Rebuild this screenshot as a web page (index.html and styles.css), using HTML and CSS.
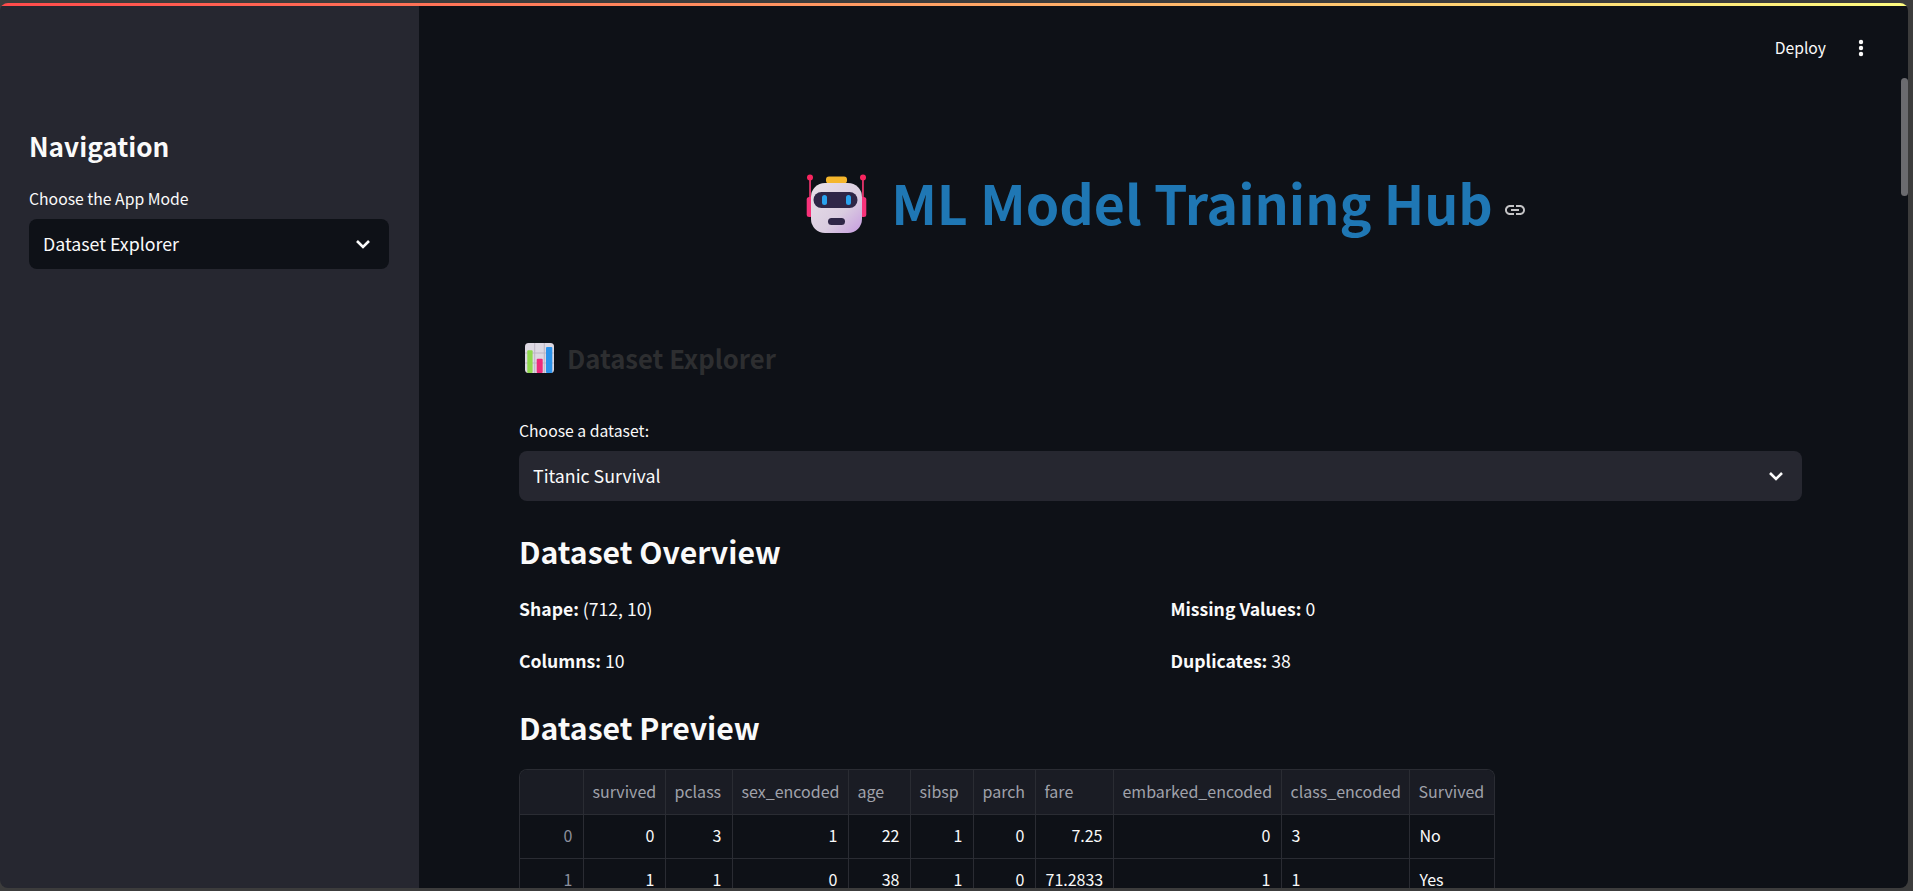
FILE: index.html
```html
<!DOCTYPE html>
<html lang="en">
<head>
<meta charset="utf-8">
<title>ML Model Training Hub</title>
<link rel="stylesheet" href="styles.css">
</head>
<body>
<div class="window">
  <div class="decoration"></div>
  <div class="app">
    <aside class="sidebar">
      <h2 class="side-title">Navigation</h2>
      <label class="label">Choose the App Mode</label>
      <div class="select select-dark">
        <span>Dataset Explorer</span>
        <svg class="chev" viewBox="0 0 24 24"><path d="M6 9l6 6 6-6" /></svg>
      </div>
    </aside>
    <main class="main">
      <div class="toolbar">
        <span class="deploy">Deploy</span>
        <svg class="dots" viewBox="0 0 6 18"><circle cx="3" cy="3" r="2.2"/><circle cx="3" cy="9" r="2.2"/><circle cx="3" cy="15" r="2.2"/></svg>
      </div>
      <div class="scrollbar"></div>
      <div class="content">
        <h1 class="hero">
          <svg class="robot" viewBox="0 0 80 75">
            <defs>
              <linearGradient id="face" x1="0" y1="0" x2="1" y2="1"><stop offset="0" stop-color="#e8dfe8"/><stop offset=".6" stop-color="#dacde0"/><stop offset="1" stop-color="#c69be0"/></linearGradient>
            </defs>
            <rect x="15.2" y="12" width="1.700" height="24" fill="#f0366f"/>
            <rect x="68.1" y="12" width="1.700" height="24" fill="#f0366f"/>
            <circle cx="16" cy="12.5" r="3" fill="#f8255f"/>
            <circle cx="69" cy="12.5" r="3" fill="#f8255f"/>
            <rect x="12.700" y="32" width="6" height="20" rx="2.500" fill="#f8327a"/>
            <rect x="66.300" y="32" width="6" height="20" rx="2.500" fill="#f8327a"/>
            <rect x="32" y="11.500" width="21" height="7" rx="3" fill="#f5b62c"/>
            <rect x="17" y="18" width="51" height="50" rx="14" fill="url(#face)"/>
            <rect x="19.500" y="27" width="44" height="16" rx="8" fill="#2f2647"/>
            <rect x="28" y="30" width="5" height="10" rx="2.500" fill="#2aa2ee"/>
            <rect x="52" y="30" width="5" height="10" rx="2.500" fill="#2aa2ee"/>
            <rect x="34" y="53" width="17" height="7" rx="3.500" fill="#2f2647"/>
          </svg>
          <span class="hero-text">ML Model Training Hub</span>
          <svg class="link" viewBox="0 0 24 24"><path d="M3.900 12c0-1.700 1.400-3.100 3.100-3.100h4V7H7c-2.800 0-5 2.200-5 5s2.200 5 5 5h4v-1.900H7c-1.700 0-3.100-1.400-3.100-3.100zM8 13h8v-2H8v2zm9-6h-4v1.900h4c1.700 0 3.100 1.400 3.100 3.100s-1.400 3.100-3.100 3.100h-4V17h4c2.800 0 5-2.200 5-5s-2.200-5-5-5z"/></svg>
        </h1>
        <h2 class="page-title">
          <svg class="chart" viewBox="0 0 29 30">
            <rect width="29" height="30" rx="3.500" fill="#ddd8e2"/>
            <path d="M9.700 0v30M19.300 0v30M0 10h29M0 20h29" stroke="#bdb6c4" stroke-width="1"/>
            <rect x="2.300" y="7.300" width="5.300" height="22.700" rx="1" fill="#8fd94e"/>
            <rect x="11.700" y="15.700" width="6" height="14.300" rx="1" fill="#ee2a7b"/>
            <rect x="21" y="4" width="6.300" height="26" rx="1" fill="#2b93ec"/>
          </svg>
          <span class="muted">Dataset Explorer</span>
        </h2>
        <label class="label label-main">Choose a dataset:</label>
        <div class="select select-light">
          <span>Titanic Survival</span>
          <svg class="chev" viewBox="0 0 24 24"><path d="M6 9l6 6 6-6" /></svg>
        </div>
        <h3 class="section overview">Dataset Overview</h3>
        <div class="stats">
          <p><b>Shape:</b> (712, 10)</p>
          <p><b>Missing Values:</b> 0</p>
          <p><b>Columns:</b> 10</p>
          <p><b>Duplicates:</b> 38</p>
        </div>
        <h3 class="section preview">Dataset Preview</h3>
        <div class="table-wrap">
          <table class="table">
            <colgroup>
              <col class="c-idx"><col class="c-survived"><col class="c-pclass"><col class="c-sex"><col class="c-age"><col class="c-sibsp"><col class="c-parch"><col class="c-fare"><col class="c-emb"><col class="c-class"><col class="c-surv2">
            </colgroup>
            <thead>
              <tr><th></th><th>survived</th><th>pclass</th><th>sex_encoded</th><th>age</th><th>sibsp</th><th>parch</th><th>fare</th><th>embarked_encoded</th><th>class_encoded</th><th>Survived</th></tr>
            </thead>
            <tbody>
              <tr><td class="idx">0</td><td>0</td><td>3</td><td>1</td><td>22</td><td>1</td><td>0</td><td>7.25</td><td>0</td><td class="txt">3</td><td class="txt">No</td></tr>
              <tr><td class="idx">1</td><td>1</td><td>1</td><td>0</td><td>38</td><td>1</td><td>0</td><td>71.2833</td><td>1</td><td class="txt">1</td><td class="txt">Yes</td></tr>
            </tbody>
          </table>
        </div>
      </div>
    </main>
  </div>
</div>
</body>
</html>
```

FILE: styles.css
```css
* { box-sizing: border-box; }
html, body { margin: 0; height: 100%; overflow: hidden; background: #3c3c3c; }
body { font-family: "Noto Sans CJK SC", "Noto Sans", sans-serif; color: #fafafa; }
.window { width: 1908px; margin-top: 3px; display: flex; flex-direction: column; overflow: hidden; border-radius: 8px; height: 885px; }
.decoration { height: 3px; flex: none; background: linear-gradient(90deg, #ff4b4b, #fffd80); }
.app { flex: 1; display: flex; min-height: 0; }
.sidebar { width: 419px; flex: none; background: #262730; padding: 118px 30px 0 29px; }
.side-title { margin: 0 0 21px; font-size: 26.200px; line-height: 44px; font-weight: 600; }
.label { display: block; font-size: 15.750px; line-height: 20px; margin-bottom: 10px; }
.select { height: 50px; border-radius: 8px; display: flex; align-items: center; justify-content: space-between; padding: 0 14px 2px; font-size: 17.800px; }
.select-dark { background: #0e1117; }
.select-light { background: #262730; }
.chev { width: 24px; height: 24px; fill: none; stroke: #fafafa; stroke-width: 2.600; margin-bottom: -2px; }
.main { flex: 1; min-width: 0; position: relative; background: #0e1117; overflow: hidden; }
.toolbar { position: absolute; top: 30px; right: 44px; display: flex; align-items: center; gap: 32px; }
.deploy { font-size: 15.700px; line-height: 24px; }
.dots { width: 6px; height: 18px; fill: #fafafa; }
.scrollbar { position: absolute; top: 72px; right: 0; width: 7px; height: 118px; background: #6b6b6f; border-radius: 4px; }
.content { padding: 0 106px 0 100px; }
.hero { margin: 0; padding-top: 152px; display: flex; align-items: center; justify-content: center; height: 240px; font-size: 53.600px; line-height: 80px; font-weight: 700; color: #1f77b4; }
.robot { width: 80px; height: 75px; flex: none; margin-right: 17px; }
.link { width: 24px; height: 24px; fill: #c4c4c6; margin-left: 10px; margin-top: 16px; flex: none; }
.page-title { margin: 0; padding: 90px 0 0 6px; display: flex; align-items: center; font-size: 25.650px; line-height: 44px; font-weight: 600; }
.chart { width: 29px; height: 30px; margin-right: 13px; flex: none; }
.muted { color: #2d2e30; }
.label-main { margin-top: 41px; }
.section { margin: 0; font-size: 30.200px; line-height: 48px; font-weight: 600; }
.overview { margin-top: 26px; }
.stats { display: grid; grid-template-columns: 1fr 1fr; column-gap: 20px; row-gap: 28px; margin-top: 22px; font-size: 17.600px; line-height: 24px; }
.stats p { margin: 0; }
.stats b { font-weight: 600; }
.preview { margin-top: 30px; }
.table-wrap { margin-top: 18px; width: 976px; border: 1px solid #2a2c33; border-bottom: 0; border-radius: 8px 8px 0 0; overflow: hidden; }
.table { border-collapse: collapse; table-layout: fixed; width: 975px; font-size: 16px; }
.c-idx { width: 63px; }
.c-survived { width: 82px; }
.c-pclass { width: 67px; }
.c-sex { width: 116px; }
.c-age { width: 62px; }
.c-sibsp { width: 63px; }
.c-parch { width: 62px; }
.c-fare { width: 78px; }
.c-emb { width: 168px; }
.c-class { width: 128px; }
.c-surv2 { width: 86px; }
.table th { background: #1a1c24; color: #a0a2ab; font-weight: 400; text-align: left; height: 44px; padding: 0 9px 2px; border: 1px solid #2a2c33; border-top: 0; white-space: nowrap; }
.table td { height: 44px; padding: 0 10px 3px; text-align: right; border: 1px solid #2a2c33; white-space: nowrap; }
.table td.idx { color: #8b8f9c; }
.table td.txt { text-align: left; }
.table th:first-child, .table td:first-child { border-left: 0; }
.table th:last-child, .table td:last-child { border-right: 0; }
```
